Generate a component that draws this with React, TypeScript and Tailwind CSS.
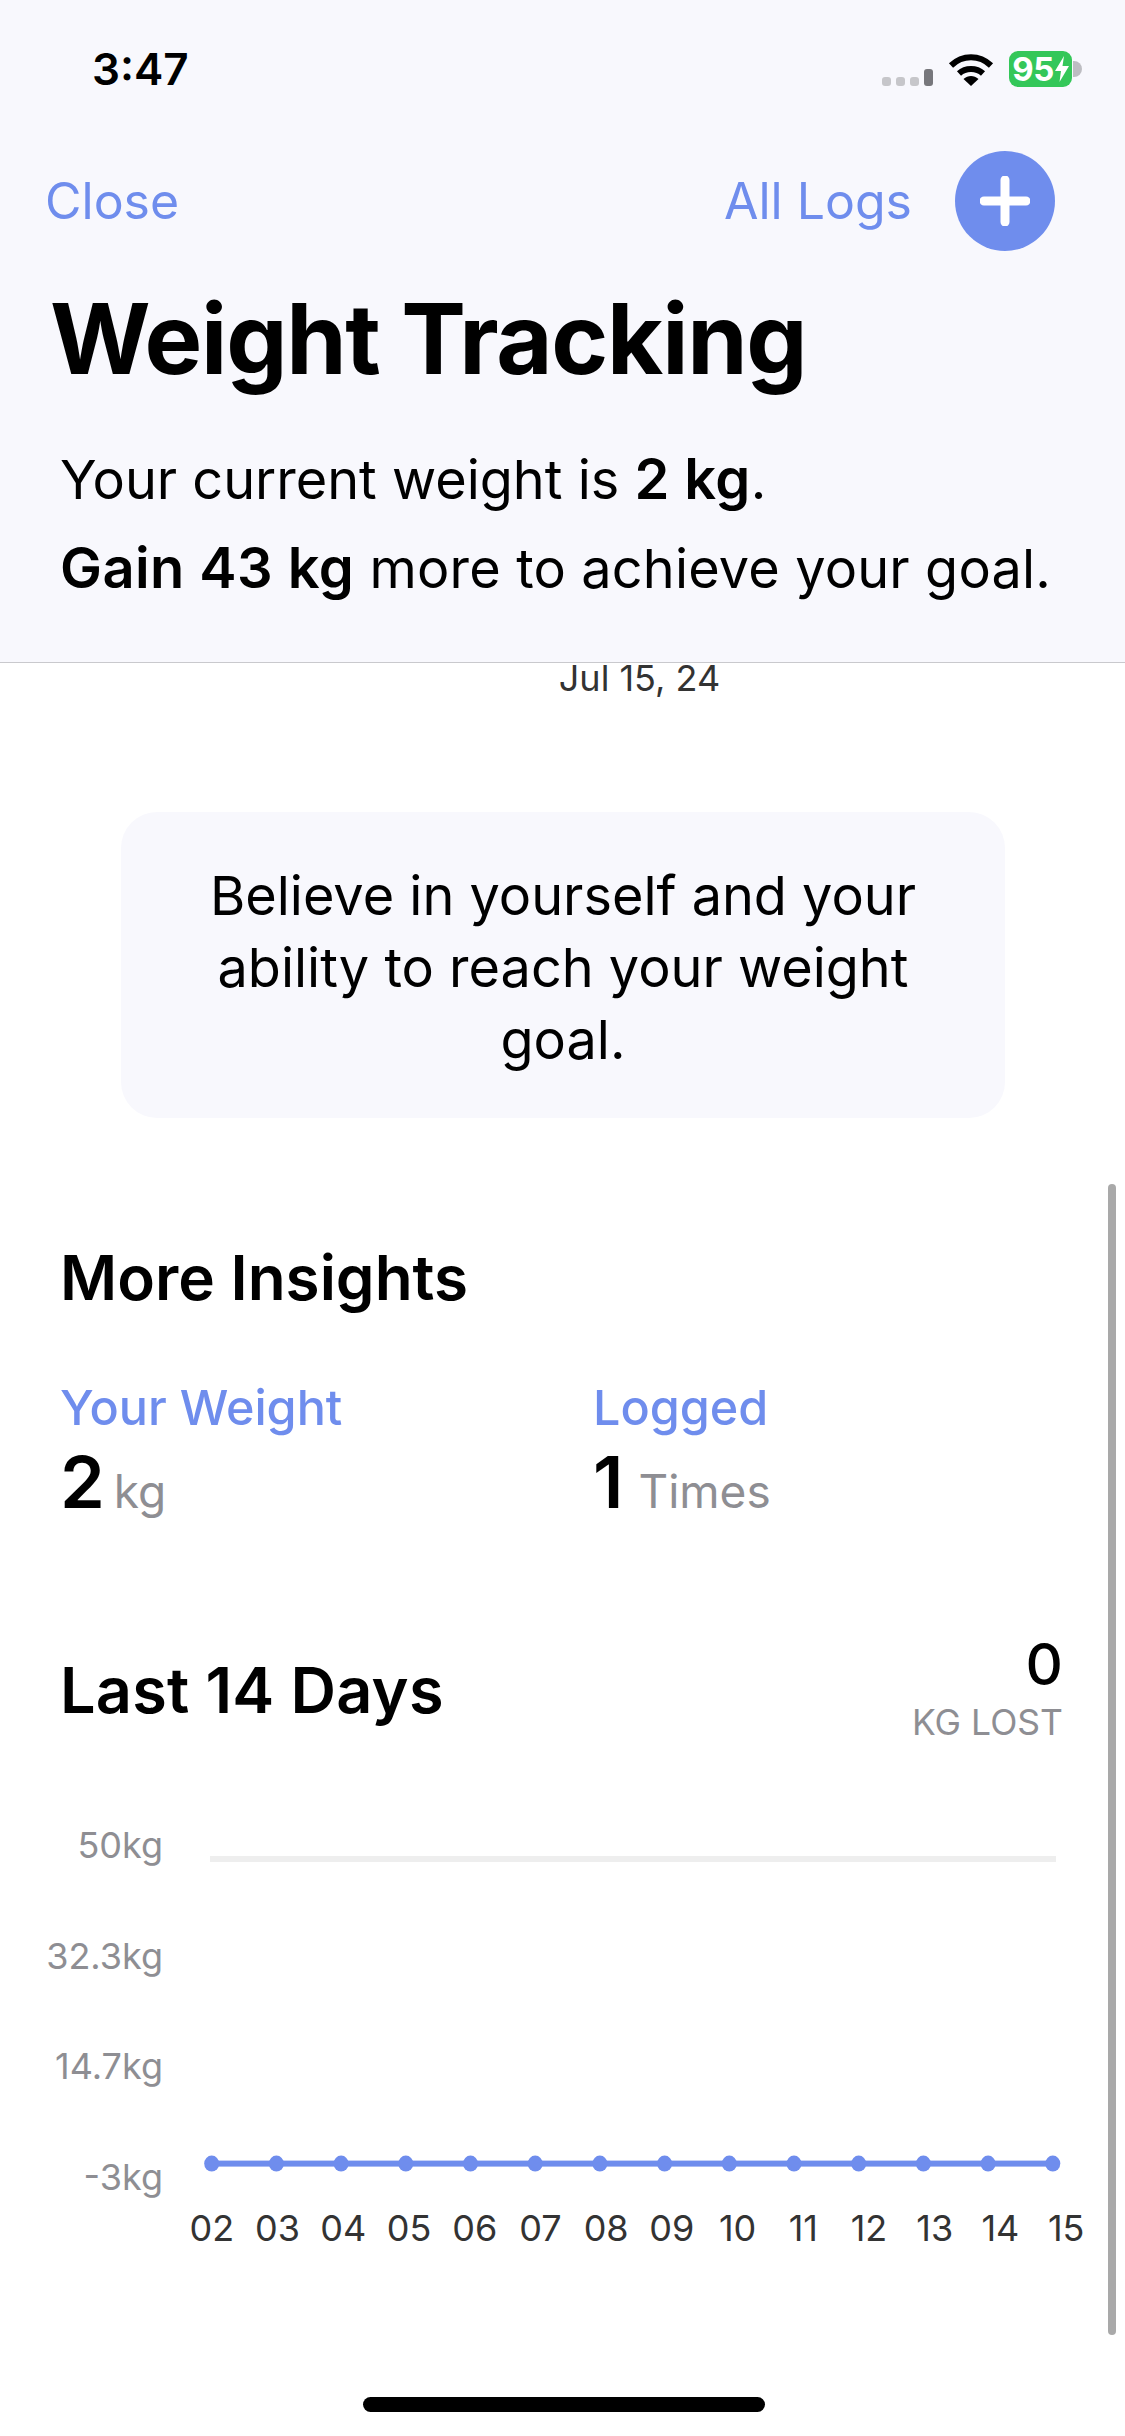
const blue = "#6f8ded";
const days = ["02","03","04","05","06","07","08","09","10","11","12","13","14","15"];

function Signal() {
  return (
    <div className="mt-[17px] flex items-end gap-[5px]">
      <div className="h-[9px] w-[9px] rounded-[3px] bg-[#c6c6ca]" />
      <div className="h-[9px] w-[9px] rounded-[3px] bg-[#c6c6ca]" />
      <div className="h-[9px] w-[9px] rounded-[3px] bg-[#c6c6ca]" />
      <div className="h-[17px] w-[9px] rounded-[3px] bg-[#77777c]" />
    </div>
  );
}

function Wifi() {
  return (
    <svg width="46" height="34" viewBox="0 0 46 34" fill="none">
      <path d="M3 13.5C14.5 2.5 31.500 2.500 43 13.500" stroke="#000" strokeWidth="6" />
      <path d="M11 21.500C17.500 15.500 28.500 15.500 35 21.500" stroke="#000" strokeWidth="6" />
      <path d="M15.500 27L23 34L30.500 27C26 23 20 23 15.500 27Z" fill="#000" />
    </svg>
  );
}

function Battery() {
  return (
    <div className="flex items-center">
      <div className="flex h-[36px] w-[63px] items-center justify-center gap-[1px] rounded-[9px] bg-[#34c759] text-[33px] font-bold leading-none text-white">
        <span className="tracking-[-0.5px]">95</span>
        <svg width="14" height="26" viewBox="0 0 14 26" fill="#fff">
          <path d="M9 0L0 15H6L4.500 26L14 10H7.500Z" />
        </svg>
      </div>
      <div className="ml-[1px] h-[16px] w-[9px] rounded-r-[8px] bg-[#bdbdc2]" />
    </div>
  );
}

function ChartPlot() {
  return (
    <svg width="875" height="340" viewBox="0 0 875 340" fill="none">
      <rect x="10" y="0" width="846" height="6" fill="#eeeeee" />
      <rect x="12" y="304.600" width="841" height="6" fill={blue} />
      {days.map((d, i) => (
        <ellipse key={d} cx={11.7 + i * 64.7} cy="307.600" rx="7.500" ry="8" fill={blue} />
      ))}
    </svg>
  );
}

export default function App() {
  return (
    <div className="relative h-[2436px] w-[1125px] overflow-hidden bg-white font-['Inter',sans-serif] text-black">
      <header className="h-[663px] border-b border-[#c9c9cd] bg-[#f8f8fd]">
        <div className="flex h-[56px] translate-y-[41px] items-center justify-between pl-[92px] pr-[43px]">
          <span className="text-[44px] font-semibold leading-none">3:47</span>
          <div className="flex items-center gap-[15px]">
            <Signal />
            <Wifi />
            <Battery />
          </div>
        </div>
        <div className="mt-[95px] flex h-[100px] items-center justify-between pl-[45px] pr-[70px]">
          <span className="text-[50px] leading-none" style={{ color: blue }}>Close</span>
          <div className="flex items-center gap-[43px]">
            <span className="text-[50px] leading-none" style={{ color: blue }}>All Logs</span>
            <div className="flex h-[100px] w-[100px] items-center justify-center rounded-full" style={{ backgroundColor: blue }}>
              <svg width="50" height="50" viewBox="0 0 50 50" fill="none">
                <path d="M25 4V46M4 25H46" stroke="#fff" strokeWidth="9" strokeLinecap="round" />
              </svg>
            </div>
          </div>
        </div>
        <h1 className="mt-[33px] pl-[50px] text-[97px] font-bold leading-[110px] tracking-[-1.25px]">Weight Tracking</h1>
        <div className="mt-[41px] pl-[60px] text-[54px] leading-[88px]">
          <p>Your current weight is <b className="text-[56px] font-semibold tracking-[0.44px]">2 kg</b>.</p>
          <p className="tracking-[0.16px]"><b className="text-[56px] font-semibold tracking-[0.44px]">Gain 43 kg</b> more to achieve your goal.</p>
        </div>
      </header>

      <main className="relative">
        <p className="pl-[154px] text-center text-[36px] leading-[30px] text-[#333333]">Jul 15, 24</p>
        <div className="ml-[121px] mt-[119px] flex h-[306px] w-[884px] items-center justify-center rounded-[36px] bg-[#f8f8fd] px-[60px] pt-[5px] text-center text-[54px] leading-[72px]">
          Believe in yourself and your ability to reach your weight goal.
        </div>

        <h2 className="ml-[60px] mt-[125px] text-[62px] font-semibold leading-[70px]">More Insights</h2>

        <div className="ml-[60px] mt-[65px] flex">
          <div className="w-[533px]">
            <div className="text-[48.5px] font-medium leading-[60px]" style={{ color: blue }}>Your Weight</div>
            <div className="mt-[4px] flex items-baseline gap-[9px] leading-[80px]">
              <span className="text-[72px] font-semibold">2</span>
              <span className="text-[46px] text-[#8e8e93]">kg</span>
            </div>
          </div>
          <div>
            <div className="text-[48.5px] font-medium leading-[60px]" style={{ color: blue }}>Logged</div>
            <div className="mt-[4px] flex items-baseline gap-[15px] leading-[80px]">
              <span className="text-[72px] font-semibold">1</span>
              <span className="text-[46px] text-[#8e8e93]">Times</span>
            </div>
          </div>
        </div>

        <div className="ml-[60px] mr-[62px] mt-[100px] flex items-center justify-between">
          <h2 className="text-[63px] font-semibold leading-[70px] tracking-[0.2px]">Last 14 Days</h2>
          <div className="text-right">
            <div className="text-[58px] font-medium leading-[66px]">0</div>
            <div className="text-[35.5px] leading-[52px] text-[#8e8e93]">KG LOST</div>
          </div>
        </div>

        <div className="mt-[76px] flex">
          <div className="flex h-[372px] w-[163px] flex-col justify-between text-right text-[36px] leading-[40px] text-[#8e8e93]">
            <span>50kg</span>
            <span>32.3kg</span>
            <span>14.7kg</span>
            <span>-3kg</span>
          </div>
          <div className="ml-[37px] mt-[31px]">
            <ChartPlot />
          </div>
        </div>
        <div className="ml-[179px] mt-[11px] grid w-[920px] grid-cols-14 text-center text-[36px] leading-[40px] text-[#333333]">
          {days.map((d) => (
            <span key={d}>{d}</span>
          ))}
        </div>
      </main>

      <div className="absolute left-[1108px] top-[1184px] h-[1151px] w-[8px] rounded-full bg-[#a9a9a9]" />
      <div className="absolute left-[363px] top-[2397px] h-[15px] w-[402px] rounded-full bg-black" />
    </div>
  );
}
